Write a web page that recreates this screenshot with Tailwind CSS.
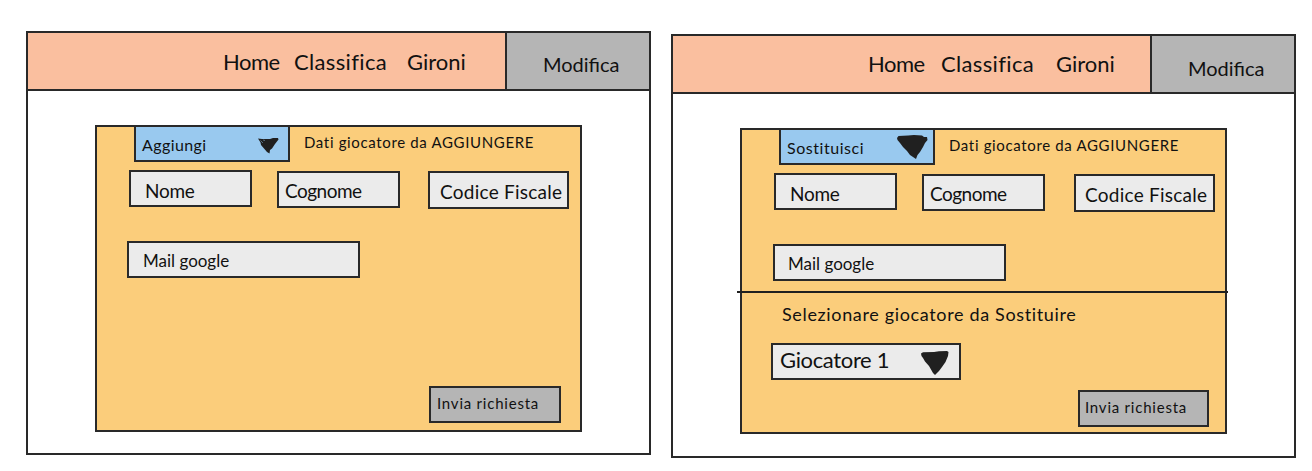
<!DOCTYPE html>
<html lang="it">
<head>
<meta charset="utf-8">
<title>Modifica giocatori</title>
<script src="https://cdn.jsdelivr.net/npm/@tailwindcss/browser@4"></script>
</head>
<body class="bg-white font-['Ink_Free',Lato,sans-serif] text-[#111] whitespace-nowrap">
<div class="flex h-[471px] w-[1312px] gap-5 overflow-hidden pl-[26px] pt-[31px]">

  <!-- Aggiungi -->
  <section class="flex h-[424px] w-[625px] flex-col border-2 border-[#292929]">
    <header class="flex h-[58px] shrink-0 border-b-2 border-[#292929] bg-[#fabf9f] text-[22px] leading-[57px]">
      <nav class="flex w-[477px] pl-[195px]">
        <a class="w-[71px] tracking-[-0.5px]">Home</a>
        <a class="w-[113px] tracking-[0.35px]">Classifica</a>
        <a>Gironi</a>
      </nav>
      <div class="flex-1 border-l-2 border-[#292929] bg-[#b5b5b5] pl-[36px] pt-[3px] text-[20px]">Modifica</div>
    </header>
    <form class="ml-[67px] mt-[34px] flex h-[307px] w-[487px] flex-col border-2 border-[#292929] bg-[#fbcd7b]">
      <div class="-mt-[2px] ml-[37px] flex h-[37px]">
        <div class="flex w-[156px] border-2 border-[#292929] bg-[#99c9ef] pl-[6px] text-[16px] leading-[36px]">
          <span class="w-[116px] tracking-[0.4px]">Aggiungi</span>
          <svg class="mt-[11px] h-[16px] w-[21px] shrink-0" viewBox="0 0 21 16"><path d="M0 0.5 4 1 12 1 15 0 20 0 20.5 1.5 17 6 14 10.5 12 12 11.5 15.5 9 14 6 10.500 3 7 2.500 4.500Z" fill="#202020"/><path d="M2.500 2.500 5 5M5 2 7 2.500" stroke="#6f90aa" stroke-width=".7" fill="none"/></svg>
        </div>
        <span class="ml-[14px] text-[15px] leading-[35px] tracking-[0.65px]">Dati giocatore da AGGIUNGERE</span>
      </div>
      <div class="ml-[32px] mt-2 flex items-start text-[19px] leading-[37px]">
        <div class="h-[37px] w-[123px] border-2 border-[#292929] bg-[#ebebeb] pl-[14px] tracking-[-0.3px]">Nome</div>
        <div class="ml-[25px] mt-px h-[37px] w-[123px] border-2 border-[#292929] bg-[#ebebeb] pl-[6px] leading-[35px] tracking-[-0.5px]">Cognome</div>
        <div class="ml-[28px] mt-px h-[38px] w-[141px] border-2 border-[#292929] bg-[#ebebeb] pl-[10px] tracking-[0.25px]">Codice Fiscale</div>
      </div>
      <div class="ml-[30px] mt-[32px] h-[37px] w-[233px] border-2 border-[#292929] bg-[#ebebeb] pl-[14px] text-[17px] leading-[35px]">Mail google</div>
      <div class="ml-[332px] mt-[108px] h-[37px] w-[132px] border-2 border-[#292929] bg-[#b5b5b5] pl-[6px] text-[15px] leading-[30px] tracking-[0.78px]">Invia richiesta</div>
    </form>
  </section>

  <!-- Sostituisci -->
  <section class="mt-[3px] flex h-[424px] w-[625px] flex-col border-2 border-[#292929]">
    <header class="flex h-[58px] shrink-0 border-b-2 border-[#292929] bg-[#fabf9f] text-[22px] leading-[55px]">
      <nav class="flex w-[477px] pl-[195px]">
        <a class="w-[73px] tracking-[-0.5px]">Home</a>
        <a class="w-[115px] tracking-[0.35px]">Classifica</a>
        <a>Gironi</a>
      </nav>
      <div class="flex-1 border-l-2 border-[#292929] bg-[#b5b5b5] pl-[36px] pt-[5px] text-[20px]">Modifica</div>
    </header>
    <form class="ml-[67px] mt-[34px] flex h-[306px] w-[487px] flex-col border-2 border-[#292929] bg-[#fbcd7b]">
      <div class="-mt-[2px] ml-[37px] flex h-[37px]">
        <div class="flex w-[156px] border-2 border-[#292929] bg-[#99c9ef] pl-[6px] text-[16px] leading-[36px]">
          <span class="w-[110px] tracking-[0.55px]">Sostituisci</span>
          <svg class="mt-[5px] h-[24px] w-[31px] shrink-0" viewBox="0 0 31 24"><path d="M0 3 1.500 1 11 .5 17 0 25 .5 27 2 30 2 30.500 5 28 8 26 12 23 17 20.500 20 19 24 16 22 13 20 10 16 6 12 3 8 .5 5Z" fill="#202020"/></svg>
        </div>
        <span class="ml-[14px] text-[15px] leading-[35px] tracking-[0.65px]">Dati giocatore da AGGIUNGERE</span>
      </div>
      <div class="ml-[32px] mt-2 flex items-start text-[19px] leading-[37px]">
        <div class="h-[37px] w-[123px] border-2 border-[#292929] bg-[#ebebeb] pl-[14px] tracking-[-0.3px]">Nome</div>
        <div class="ml-[25px] mt-px h-[37px] w-[123px] border-2 border-[#292929] bg-[#ebebeb] pl-[6px] leading-[35px] tracking-[-0.5px]">Cognome</div>
        <div class="ml-[29px] mt-px h-[38px] w-[141px] border-2 border-[#292929] bg-[#ebebeb] pl-[9px] tracking-[0.25px]">Codice Fiscale</div>
      </div>
      <div class="ml-[31px] mt-[32px] h-[37px] w-[233px] border-2 border-[#292929] bg-[#ebebeb] pl-[13px] text-[17px] leading-[35px]">Mail google</div>
      <hr class="-ml-[5px] mt-[10px] w-[491px] border-0 border-t-2 border-[#202020]">
      <p class="ml-[40px] mt-[10px] text-[18px] leading-[22px] tracking-[0.65px]">Selezionare giocatore da Sostituire</p>
      <div class="mt-[18px] ml-[29px] flex h-[37px] w-[190px] shrink-0 border-2 border-[#292929] bg-[#ebebeb] pl-[7px] text-[22px] leading-[29px]">
        <span class="w-[141px] tracking-[-0.35px]">Giocatore 1</span>
        <svg class="mt-[6px] h-[24px] w-[28px] shrink-0" viewBox="0 0 28 24"><path d="M0 2.500 2 1.200 13 1 18 .3 26 0 27.500 1 27 5 24.500 11 21 16 18 20 16 22 14 24 12 22 8 15 4 10.500 2 7 .5 5Z" fill="#202020"/></svg>
      </div>
      <div class="ml-[336px] mt-[10px] h-[37px] w-[131px] shrink-0 border-2 border-[#292929] bg-[#b5b5b5] pl-[5px] text-[15px] leading-[31px] tracking-[0.78px]">Invia richiesta</div>
    </form>
  </section>
</div>
</body>
</html>
